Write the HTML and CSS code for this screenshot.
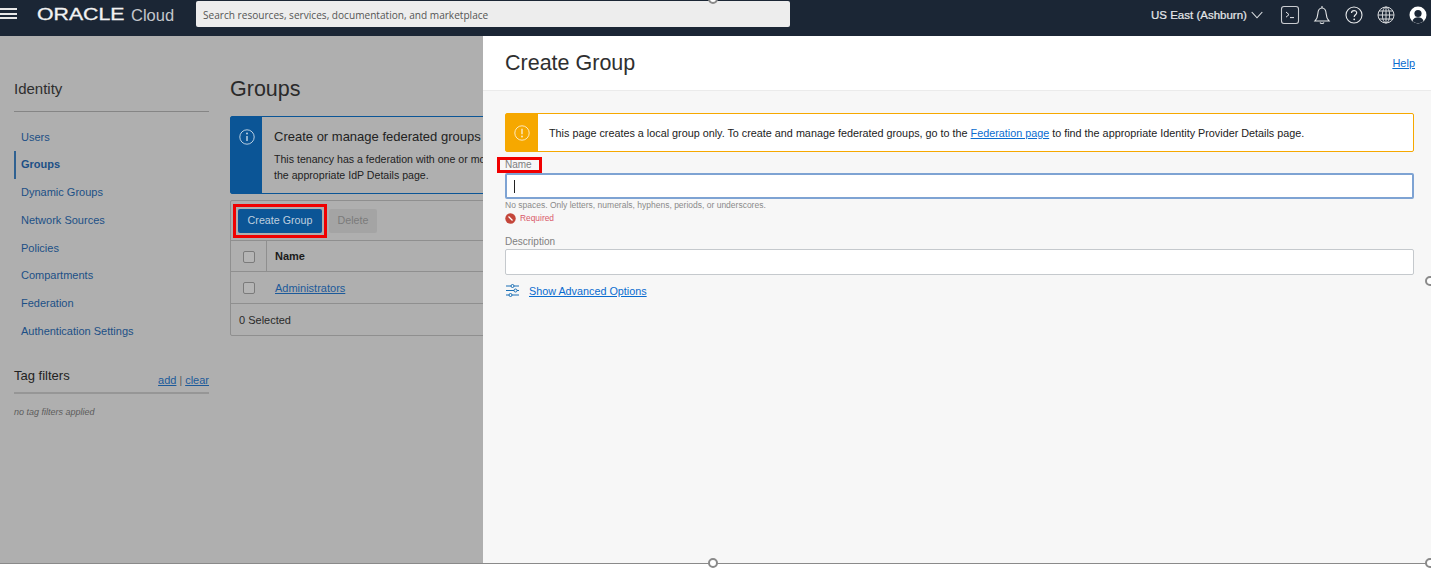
FILE: index.html
```html
<!DOCTYPE html>
<html lang="en">
<head>
<title>Create Group</title>
<meta charset="utf-8">
<link rel="stylesheet" href="styles.css">
</head>
<body>

<div class="shot">
  <header class="topbar">
    <div class="burger"><span></span><span></span><span></span></div>
    <div class="logo"><span class="logo-oracle">ORACLE</span><span class="logo-cloud">Cloud</span></div>
    <div class="search">Search resources, services, documentation, and marketplace</div>
    <div class="top-right">
      <span class="region">US East (Ashburn)</span>
      <svg class="chev" width="12" height="8" viewBox="0 0 12 8"><path d="M.7 1l5.300 5.800L11.300 1" fill="none" stroke="#dfe2e5" stroke-width="1.100"/></svg>
      <svg class="top-icon" width="20" height="20" viewBox="0 0 20 20"><rect x="1.500" y="1.500" width="17" height="17" rx="2.500" fill="none" stroke="#c9ccd0" stroke-width="1.100"/><path d="M6 7l3 2.600-3 2.600M10 12.600h4" fill="none" stroke="#e6e8ea" stroke-width="1"/></svg>
      <svg class="top-icon" width="18" height="20" viewBox="0 0 18 20"><path d="M2 16c2-2 2.600-3.500 2.800-7C5 5.500 6.500 3 9 3s4 2.500 4.200 6c.2 3.500.8 5 2.800 7z" fill="none" stroke="#e6e8ea" stroke-width="1.100"/><path d="M7 17.500c.5 1.300 3.500 1.300 4 0M9 1v2" fill="none" stroke="#e6e8ea" stroke-width="1.100"/></svg>
      <svg class="top-icon" width="18" height="18" viewBox="0 0 18 18"><circle cx="9" cy="9" r="8" fill="none" stroke="#e6e8ea" stroke-width="1.100"/><path d="M6.500 7c0-3.200 5.200-3.200 5.200-.2 0 2-2.500 2-2.500 4.200" fill="none" stroke="#e6e8ea" stroke-width="1.200"/><circle cx="9.200" cy="13.300" r=".9" fill="#e6e8ea"/></svg>
      <svg class="top-icon" width="18" height="18" viewBox="0 0 18 18"><g fill="none" stroke="#d5d7da" stroke-width="1"><circle cx="9" cy="9" r="8"/><ellipse cx="9" cy="9" rx="3.600" ry="8"/><path d="M9 1v16M1 9h16M2 5h14M2 13h14"/></g></svg>
      <svg class="top-icon avatar" width="18" height="18" viewBox="0 0 18 18"><circle cx="9" cy="9" r="8.500" fill="#fff"/><circle cx="9" cy="7.500" r="3.600" fill="#1b2635"/><path d="M3.500 15c1-3 3-3.800 5.500-3.800s4.500.8 5.500 3.800c-1.500 1.500-3.500 2.200-5.500 2.200s-4-.7-5.500-2.200z" fill="#1b2635"/></svg>
    </div>
  </header>

  <div class="workspace">
    <div class="backdrop">
      <aside class="sidebar">
        <h3 class="side-title">Identity</h3>
        <ul class="side-nav">
          <li>Users</li>
          <li class="active">Groups</li>
          <li>Dynamic Groups</li>
          <li>Network Sources</li>
          <li>Policies</li>
          <li>Compartments</li>
          <li>Federation</li>
          <li>Authentication Settings</li>
        </ul>
        <div class="tag-head">
          <span class="tag-title">Tag filters</span>
          <span class="tag-links"><a href="#">add</a> <i>|</i> <a href="#">clear</a></span>
        </div>
        <p class="tag-none">no tag filters applied</p>
      </aside>

      <main class="content">
        <h1 class="page-title">Groups</h1>
        <div class="info">
          <div class="info-side">
            <svg width="16" height="16" viewBox="0 0 16 16"><circle cx="8" cy="8" r="7.200" fill="none" stroke="#b9cfe2" stroke-width="1"/><path d="M8 7v5" stroke="#b9cfe2" stroke-width="1.500"/><circle cx="8" cy="4.600" r="1" fill="#b9cfe2"/></svg>
          </div>
          <div class="info-body">
            <div class="info-title">Create or manage federated groups</div>
            <p class="info-text">This tenancy has a federation with one or more Identity Providers. To manage groups go to<br>the appropriate IdP Details page.</p>
          </div>
        </div>
        <div class="card">
          <div class="toolbar">
            <span class="mark"><button class="btn-primary">Create Group</button></span>
            <button class="btn-off">Delete</button>
          </div>
          <div class="row row-head">
            <div class="cell-check"><span class="check"></span></div>
            <div class="cell-name">Name</div>
          </div>
          <div class="row row-item">
            <div class="cell-check plain"><span class="check"></span></div>
            <div class="cell-name"><a href="#">Administrators</a></div>
          </div>
          <div class="card-foot">0 Selected</div>
        </div>
      </main>
    </div>

    <section class="drawer">
      <div class="drawer-head">
        <h2>Create Group</h2>
        <a href="#">Help</a>
      </div>
      <div class="drawer-body">
        <div class="warning">
          <div class="warning-side">
            <svg width="16" height="16" viewBox="0 0 16 16"><circle cx="8" cy="8" r="7.200" fill="none" stroke="#fde9bd" stroke-width="1"/><path d="M8 3.800v5.400" stroke="#fde9bd" stroke-width="1.500"/><circle cx="8" cy="11.600" r="1" fill="#fde9bd"/></svg>
          </div>
          <p>This page creates a local group only. To create and manage federated groups, go to the <a href="#">Federation page</a> to find the appropriate Identity Provider Details page.</p>
        </div>
        <div class="name-label">
          <span class="label-mark"></span>
          <label class="field-label">Name</label>
        </div>
        <div class="input focused"><span class="caret"></span></div>
        <p class="hint">No spaces. Only letters, numerals, hyphens, periods, or underscores.</p>
        <p class="error">
          <svg width="11" height="11" viewBox="0 0 11 11"><circle cx="5.500" cy="5.500" r="5.200" fill="#c4463a"/><path d="M3.500 3.500l4 4" stroke="#fff" stroke-width="1.200"/></svg>
          Required
        </p>
        <label class="field-label desc-label">Description</label>
        <div class="input"></div>
        <div class="advanced">
          <svg width="15" height="15" viewBox="0 0 15 15"><g fill="none" stroke="#1a6fb5" stroke-width="1"><path d="M1 3h5M9 3h5M1 7.500h8M12 7.500h2M1 12h3M7 12h7"/><circle cx="7.500" cy="3" r="1.500"/><circle cx="10.500" cy="7.500" r="1.500"/><circle cx="5.500" cy="12" r="1.500"/></g></svg>
          <a href="#">Show Advanced Options</a>
        </div>
      </div>
    </section>
  </div>
</div>

<span class="handle handle-top"></span>
<span class="handle handle-right"></span>
<span class="handle handle-corner"></span>
<span class="handle handle-bottom"></span>

</body>
</html>
```

FILE: styles.css
```css
* {
  box-sizing: border-box;
}

html, body {
  margin: 0;
  height: 571px;
  overflow: hidden;
  background: #fff;
}

body {
  position: relative;
  font-family: "Liberation Sans", Arial, sans-serif;
  font-size: 11px;
}

a {
  color: #0a6ccf;
}

.shot {
  height: 564px;
  border-bottom: 1px solid #8a8a8a;
  display: flex;
  flex-direction: column;
}

/* Top bar */
.topbar {
  height: 36px;
  flex: none;
  background: #1b2635;
  display: flex;
  align-items: center;
  color: #fff;
}

.burger {
  width: 17px;
  margin-right: 20px;
  margin-top: -6px;
}

.burger span {
  display: block;
  height: 2px;
  background: #e8e8e8;
  margin-bottom: 2.500px;
}

.logo {
  width: 159px;
  display: flex;
  align-items: center;
  margin-top: -6px;
}

.logo-oracle {
  font-size: 17px;
  width: 88px;
  display: inline-block;
  transform: scaleX(1.250);
  transform-origin: left center;
  color: #f2f2f2;
  -webkit-text-stroke: .3px #f2f2f2;
}

.logo-cloud {
  font-size: 16.500px;
  margin-left: 6px;
  color: #c4c7cb;
}

.search {
  width: 594px;
  height: 26px;
  margin-top: -8px;
  padding-left: 7px;
  background: #ededed;
  border-radius: 2px;
  color: #555;
  font-family: "Open Sans", sans-serif;
  font-size: 10.100px;
  line-height: 28px;
}

.top-right {
  display: flex;
  align-items: center;
  margin-left: 361px;
  margin-top: -6px;
}

.region {
  font-size: 11.500px;
  color: #e6e8ea;
  -webkit-text-stroke: .2px #e6e8ea;
}

.chev {
  margin-left: 4px;
  margin-right: 17px;
}

.top-icon {
  margin-right: 14px;
  flex: none;
}

.top-icon:nth-of-type(2) {
  margin-right: 13px;
}

.top-icon.avatar {
  margin-right: 0;
  margin-left: 0;
}

/* Page behind the drawer */
.workspace {
  flex: 1;
  display: flex;
  min-height: 0;
}

.backdrop {
  width: 483px;
  flex: none;
  background: #afafaf;
  display: flex;
  overflow: hidden;
}

.sidebar {
  width: 195px;
  flex: none;
  margin-left: 14px;
  padding-top: 44px;
}

.side-title {
  margin: 0;
  height: 32px;
  border-bottom: 1px solid #858585;
  font-size: 15px;
  font-weight: normal;
  color: #2e2e2e;
}

.side-nav {
  list-style: none;
  margin: 11.500px 0 0;
  padding: 0;
}

.side-nav li {
  height: 27.800px;
  line-height: 27.800px;
  padding-left: 7px;
  color: #1c4f86;
}

.side-nav li.active {
  border-left: 2px solid #2f6191;
  padding-left: 5px;
  font-weight: bold;
}

.tag-head {
  display: flex;
  justify-content: space-between;
  align-items: flex-end;
  height: 24px;
  margin-top: 24px;
  padding-bottom: 6px;
  border-bottom: 2px solid #969696;
}

.tag-title {
  font-size: 13px;
  color: #222;
  margin-bottom: 3px;
}

.tag-links {
  color: #555;
  font-size: 11px;
}

.tag-links a {
  color: #1c5a9a;
}

.tag-links i {
  font-style: normal;
  font-size: 10px;
}

.tag-none {
  margin: 13px 0 0;
  font-size: 9px;
  font-style: italic;
  color: #5c5c5c;
}

.content {
  flex: none;
  width: 640px;
  margin-left: 21px;
  padding-top: 40px;
}

.page-title {
  margin: 0 0 14px;
  height: 26px;
  font-size: 21.500px;
  line-height: 26px;
  font-weight: normal;
  color: #2a2a2a;
}

.info {
  height: 78px;
  display: flex;
  border: 1px solid #0b5596;
  border-radius: 2px;
}

.info-side {
  width: 31px;
  background: #0b5596;
  display: flex;
  justify-content: center;
  padding-top: 12px;
}

.info-body {
  padding: 11px 0 0 12px;
  color: #222;
}

.info-title {
  font-size: 13px;
  line-height: 18px;
  margin-bottom: 6px;
}

.info-text {
  margin: 0;
  font-size: 10.600px;
  line-height: 15.500px;
  white-space: nowrap;
}

.card {
  margin-top: 6px;
  height: 136px;
  border: 1px solid #8f8f8f;
  border-radius: 2px;
}

.toolbar {
  height: 40px;
  display: flex;
  align-items: center;
  padding-left: 2px;
  border-bottom: 1px solid #8f8f8f;
}

.mark {
  display: block;
  border: 3px solid #f00000;
  padding: 2px;
  height: 34px;
  margin-right: 2px;
}

.btn-primary, .btn-off {
  display: block;
  border: 0;
  padding: 0 0 2px;
  height: 24px;
  border-radius: 2px;
  font-family: inherit;
  font-size: 10.700px;
}

.btn-primary {
  width: 84px;
  background: #0b5596;
  color: #bfcfdf;
}

.btn-off {
  width: 48px;
  background: #a4a4a4;
  color: #7b7b7b;
}

.row {
  display: flex;
  border-bottom: 1px solid #8f8f8f;
}

.row-head {
  height: 31px;
}

.row-item {
  height: 32px;
}

.cell-check {
  width: 36px;
  display: flex;
  align-items: center;
  justify-content: center;
  border-right: 1px solid #8f8f8f;
  padding-top: 1px;
}

.cell-check.plain {
  border-right: 0;
  width: 36px;
}

.check {
  width: 12px;
  height: 12px;
  border: 1px solid #7b7b7b;
  border-radius: 2px;
  background: #b5b5b5;
}

.cell-name {
  padding-left: 8px;
  line-height: 30px;
  color: #1a1a1a;
  font-size: 11px;
}

.row-head .cell-name {
  font-weight: bold;
}

.row-item .cell-name {
  line-height: 32px;
}

.row-item .cell-name a {
  color: #1c5a9a;
}

.card-foot {
  padding-left: 8px;
  line-height: 33px;
  color: #2a2a2a;
}

/* Drawer */
.drawer {
  flex: 1;
  background: #f7f7f7;
}

.drawer-head {
  height: 55px;
  background: #fff;
  border-bottom: 1px solid #ebebeb;
  display: flex;
  justify-content: space-between;
  padding: 14px 16px 0 22px;
}

.drawer-head h2 {
  margin: 0;
  font-size: 21.500px;
  line-height: 26px;
  font-weight: normal;
  color: #2f2f2f;
}

.drawer-head a {
  font-size: 11px;
  margin-top: 7px;
}

.drawer-body {
  padding: 22px 17px 0 22px;
}

.warning {
  height: 39px;
  display: flex;
  align-items: center;
  background: #fff;
  border: 1px solid #f6a800;
  border-radius: 2px;
}

.warning-side {
  width: 32px;
  height: 100%;
  background: #f6a800;
  display: flex;
  align-items: center;
  justify-content: center;
}

.warning p {
  margin: 0 0 0 11px;
  color: #222;
  font-size: 10.800px;
  white-space: nowrap;
}

.field-label {
  display: block;
  color: #808080;
  font-size: 10px;
  line-height: 12px;
}

.name-label {
  position: relative;
  margin-top: 7px;
  height: 14px;
}

/* red box somebody drew on the screenshot */
.label-mark {
  position: absolute;
  left: -8px;
  top: -2px;
  width: 45px;
  height: 16px;
  border: 3px solid #f00000;
}

.desc-label {
  margin-top: 12px;
  margin-bottom: 1px;
  height: 12px;
}

.input {
  height: 26px;
  background: #fff;
  border: 1px solid #c5c9cd;
  border-radius: 2px;
  display: flex;
  align-items: center;
  padding-left: 8px;
}

.input.focused {
  border: 2px solid #7ea3d3;
  padding-left: 7px;
}

.caret {
  width: 1px;
  height: 13px;
  background: #222;
}

.hint {
  margin: 1px 0 0;
  font-size: 8.500px;
  line-height: 10px;
  color: #8a8a8a;
}

.error {
  margin: 2px 0 0;
  display: flex;
  align-items: center;
  gap: 4px;
  height: 12px;
  font-size: 8.400px;
  color: #d9596a;
}

.advanced {
  display: flex;
  align-items: center;
  gap: 9px;
  margin-top: 8px;
  font-size: 10.800px;
}

/* selection handles left in the screenshot */
.handle {
  position: absolute;
  width: 10px;
  height: 10px;
  background: #fff;
  border: 2px solid #8a8a8a;
  border-radius: 50%;
}

.handle-top { left: 708px; top: -6px; }
.handle-right { left: 1425px; top: 276px; }
.handle-corner { left: 1425px; top: 558px; }
.handle-bottom { left: 708px; top: 558px; }
```
